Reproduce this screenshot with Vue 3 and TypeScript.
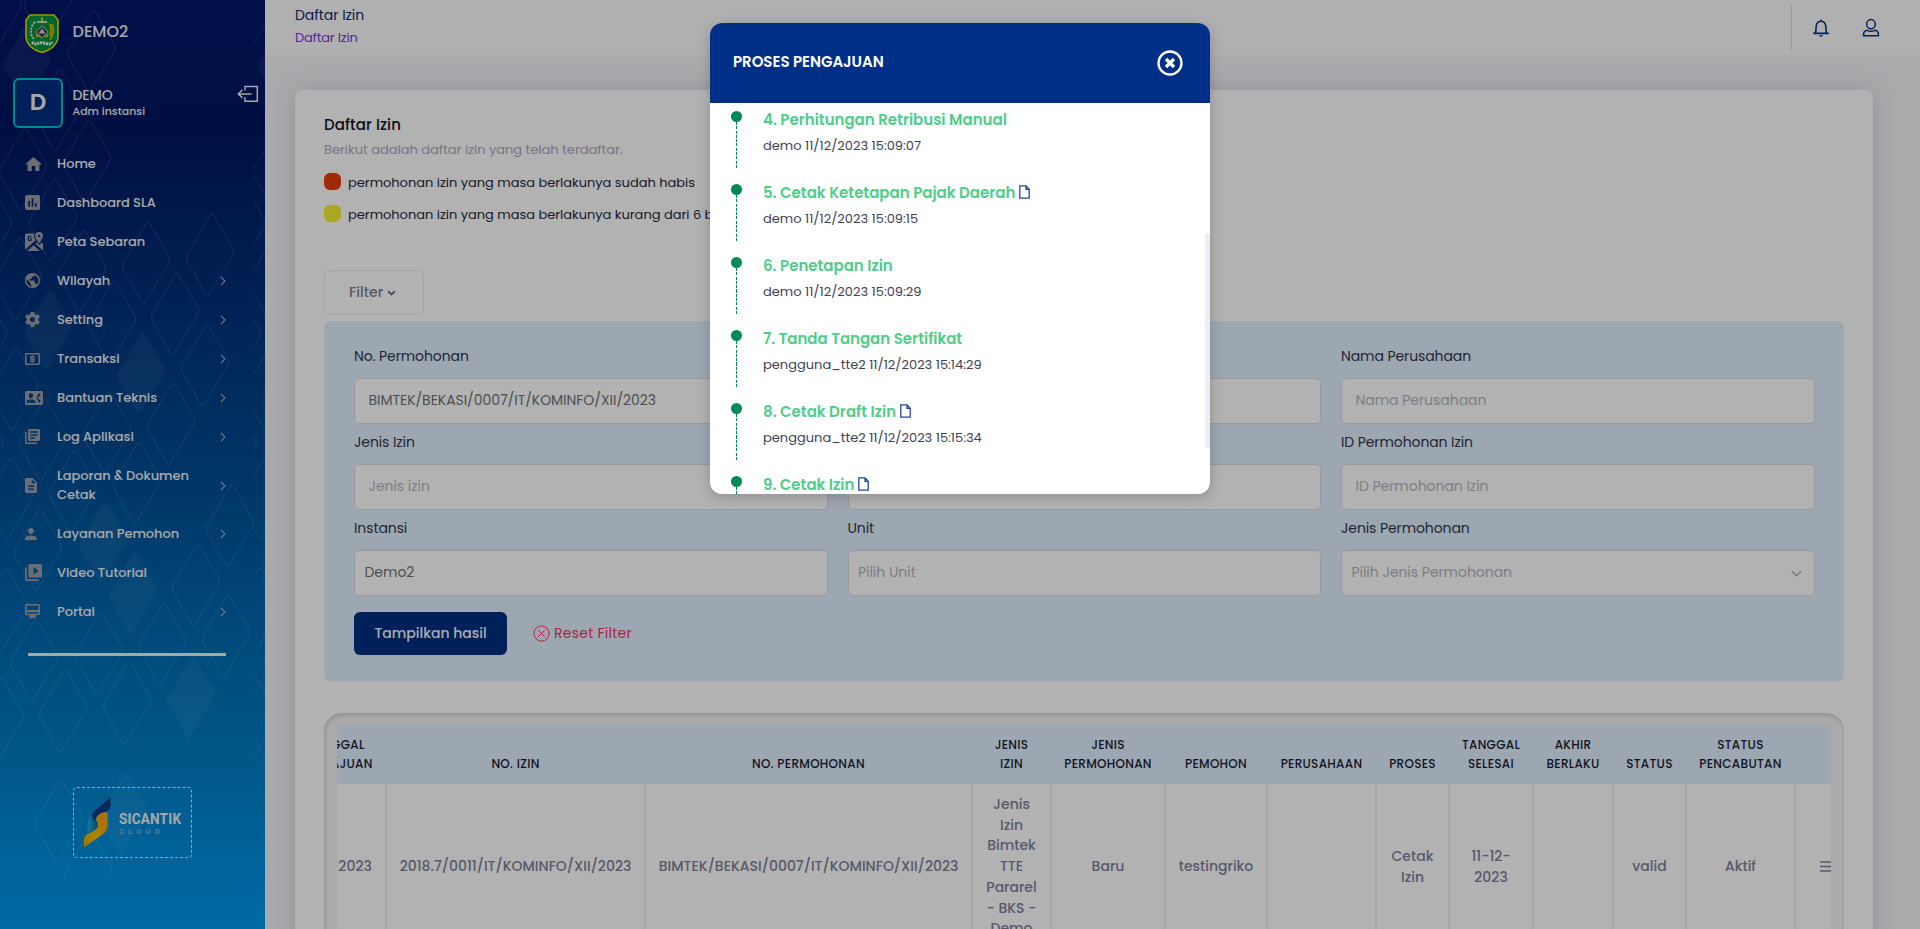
<script setup lang="ts">
interface MenuItem {
  label: string
  path: string
  viewBox: string
  width: number
  height: number
  arrow?: boolean
  tall?: boolean
}

interface Step {
  title: string
  info: string
  file?: boolean
}

interface Field {
  label: string
  placeholder: string
  value?: string
  kind?: 'input' | 'select'
  arrow?: boolean
}

const menu: MenuItem[] = [
  { label: 'Home', width: 17, height: 14, viewBox: '2 3 20 17', path: 'M10 20v-6h4v6h5v-8h3L12 3 2 12h3v8z' },
  { label: 'Dashboard SLA', width: 15, height: 15, viewBox: '3 3 18 18', path: 'M19 3H5c-1.1 0-2 .9-2 2v14c0 1.1.9 2 2 2h14c1.1 0 2-.9 2-2V5c0-1.1-.9-2-2-2zM9 17H7v-7h2v7zm4 0h-2V7h2v10zm4 0h-2v-4h2v4z' },
  { label: 'Peta Sebaran', width: 18, height: 19, viewBox: '0 0 18 19', path: 'M14 0Q10 .2 10 4Q10.400 7 14 11.200Q17.600 7 18 4Q18 .2 14 0zM14 2.400L15.600 4L14 5.600L12.400 4zM2 1.500H9Q8.300 5 10.600 8.200L.3 17.600Q0 17.200 0 16.500V3.500Q0 1.500 2 1.500zM6.400 3.900H3.800L2.700 5V7.800L3.800 8.900H6.600V6H4.700V7H5.500V7.900H4.200L3.800 7.400V5.400L4.200 4.900H6.400zM2.200 19L8.600 13.200L15 19zM10.400 11.800L12 10.200L14 13L17 10.500Q18 11 18 12V17.500Q18 18 17.500 18.300z' },
  { label: 'Wilayah', arrow: true, width: 15, height: 15, viewBox: '2 2 20 20', path: 'M12 2C6.480 2 2 6.480 2 12s4.480 10 10 10 10-4.480 10-10S17.520 2 12 2zm-1 17.930c-3.950-.49-7-3.850-7-7.930 0-.62.08-1.210.21-1.790L9 15v1c0 1.100.9 2 2 2v1.930zm6.900-2.540c-.26-.81-1-1.390-1.900-1.390h-1v-3c0-.55-.45-1-1-1H8v-2h2c.55 0 1-.45 1-1V7h2c1.100 0 2-.9 2-2v-.41c2.930 1.190 5 4.060 5 7.410 0 2.080-.8 3.970-2.100 5.390z' },
  { label: 'Setting', arrow: true, width: 15, height: 15, viewBox: '2 2 20 20', path: 'M19.430 12.980c.04-.32.07-.64.07-.98s-.03-.66-.07-.98l2.110-1.650c.19-.15.24-.42.12-.64l-2-3.460c-.12-.22-.39-.3-.61-.22l-2.490 1c-.52-.4-1.080-.73-1.690-.98l-.38-2.650C14.460 2.180 14.250 2 14 2h-4c-.25 0-.46.18-.49.42l-.38 2.650c-.61.25-1.170.59-1.690.98l-2.490-1c-.23-.09-.49 0-.61.22l-2 3.460c-.13.22-.07.49.12.64l2.110 1.650c-.04.32-.07.65-.07.98s.03.66.07.98l-2.110 1.650c-.19.15-.24.42-.12.64l2 3.460c.12.22.39.3.61.22l2.490-1c.52.4 1.080.73 1.690.98l.38 2.650c.03.24.24.42.49.42h4c.25 0 .46-.18.49-.42l.38-2.650c.61-.25 1.170-.59 1.690-.98l2.490 1c.23.09.49 0 .61-.22l2-3.460c.12-.22.07-.49-.12-.64l-2.110-1.650zM12 15.500c-1.930 0-3.500-1.570-3.500-3.500s1.570-3.500 3.500-3.500 3.500 1.570 3.500 3.500-1.570 3.500-3.500 3.500z' },
  { label: 'Transaksi', arrow: true, width: 15, height: 12, viewBox: '2 4 20 16', path: 'M11 17h2v-1h1c.55 0 1-.45 1-1v-3c0-.55-.45-1-1-1h-3v-1h4V8h-2V7h-2v1h-1c-.55 0-1 .45-1 1v3c0 .55.45 1 1 1h3v1H9v2h2v1zm9-13H4c-1.110 0-1.990.89-1.990 2L2 18c0 1.110.89 2 2 2h16c1.110 0 2-.89 2-2V6c0-1.110-.89-2-2-2zm0 14H4V6h16v12z' },
  { label: 'Bantuan Teknis', arrow: true, width: 18, height: 14, viewBox: '0 3 24 18', path: 'M22 3H2C.9 3 0 3.900 0 5v14c0 1.100.9 2 2 2h20c1.100 0 1.990-.9 1.990-2L24 5c0-1.100-.9-2-2-2zM8 6c1.660 0 3 1.340 3 3s-1.340 3-3 3-3-1.340-3-3 1.340-3 3-3zm6 12H2v-1c0-2 4-3.100 6-3.100s6 1.100 6 3.100v1zm3.850-4h1.640L21 16l-1.990 1.990c-1.310-.98-2.280-2.380-2.730-3.990-.18-.64-.28-1.310-.28-2s.1-1.360.28-2c.45-1.620 1.420-3.010 2.730-3.990L21 8l-1.510 2h-1.640c-.22.63-.35 1.300-.35 2s.13 1.370.35 2z' },
  { label: 'Log Aplikasi', arrow: true, width: 15, height: 15, viewBox: '2 2 20 20', path: 'M4 6H2v14c0 1.100.9 2 2 2h14v-2H4V6zm16-4H8c-1.100 0-2 .9-2 2v12c0 1.100.9 2 2 2h12c1.100 0 2-.9 2-2V4c0-1.100-.9-2-2-2zm-1 9H9V9h10v2zm-4 4H9v-2h6v2zm4-8H9V5h10v2z' },
  { label: 'Laporan & Dokumen Cetak', arrow: true, tall: true, width: 12, height: 15, viewBox: '4 2 16 20', path: 'M14 2H6c-1.100 0-1.990.9-1.990 2L4 20c0 1.100.89 2 1.990 2H18c1.100 0 2-.9 2-2V8l-6-6zm2 16H8v-2h8v2zm0-4H8v-2h8v2zm-3-5V3.500L18.500 9H13z' },
  { label: 'Layanan Pemohon', arrow: true, width: 12, height: 12, viewBox: '4 4 16 16', path: 'M12 12c2.210 0 4-1.790 4-4s-1.790-4-4-4-4 1.790-4 4 1.790 4 4 4zm0 2c-2.670 0-8 1.340-8 4v2h16v-2c0-2.660-5.330-4-8-4z' },
  { label: 'Video Tutorial', width: 17, height: 17, viewBox: '2 2 20 20', path: 'M4 6H2v14c0 1.100.9 2 2 2h14v-2H4V6zm16-4H8c-1.100 0-2 .9-2 2v12c0 1.100.9 2 2 2h12c1.100 0 2-.9 2-2V4c0-1.100-.9-2-2-2zm-8 12.500v-9l6 4.500-6 4.500z' },
  { label: 'Portal', arrow: true, width: 15, height: 15, viewBox: '2 2 20 20', path: 'M20 2H4c-1.110 0-2 .89-2 2v11c0 1.110.89 2 2 2h4v5l4-2 4 2v-5h4c1.110 0 2-.89 2-2V4c0-1.110-.89-2-2-2zm0 13H4v-2h16v2zm0-5H4V4h16v6z' },
]

const steps: Step[] = [
  { title: '4. Perhitungan Retribusi Manual', info: 'demo 11/12/2023 15:09:07' },
  { title: '5. Cetak Ketetapan Pajak Daerah', info: 'demo 11/12/2023 15:09:15', file: true },
  { title: '6. Penetapan Izin', info: 'demo 11/12/2023 15:09:29' },
  { title: '7. Tanda Tangan Sertifikat', info: 'pengguna_tte2 11/12/2023 15:14:29' },
  { title: '8. Cetak Draft Izin', info: 'pengguna_tte2 11/12/2023 15:15:34', file: true },
  { title: '9. Cetak Izin', info: '', file: true },
]

const fields: Field[] = [
  { label: 'No. Permohonan', placeholder: '', value: 'BIMTEK/BEKASI/0007/IT/KOMINFO/XII/2023' },
  { label: '', placeholder: '' },
  { label: 'Nama Perusahaan', placeholder: 'Nama Perusahaan' },
  { label: 'Jenis Izin', placeholder: 'Jenis izin' },
  { label: '', placeholder: '' },
  { label: 'ID Permohonan Izin', placeholder: 'ID Permohonan Izin' },
  { label: 'Instansi', placeholder: '', value: 'Demo2', kind: 'select' },
  { label: 'Unit', placeholder: 'Pilih Unit', kind: 'select' },
  { label: 'Jenis Permohonan', placeholder: 'Pilih Jenis Permohonan', kind: 'select', arrow: true },
]

const columns: string[][] = [
  ['TANGGAL', 'PENGAJUAN'], ['NO. IZIN'], ['NO. PERMOHONAN'], ['JENIS', 'IZIN'], ['JENIS', 'PERMOHONAN'],
  ['PEMOHON'], ['PERUSAHAAN'], ['PROSES'], ['TANGGAL', 'SELESAI'], ['AKHIR', 'BERLAKU'], ['STATUS'],
  ['STATUS', 'PENCABUTAN'], [],
]

const row: string[][] = [
  ['11-12-2023'], ['2018.7/0011/IT/KOMINFO/XII/2023'], ['BIMTEK/BEKASI/0007/IT/KOMINFO/XII/2023'],
  ['Jenis', 'Izin', 'Bimtek', 'TTE', 'Pararel', '- BKS -', 'Demo'], ['Baru'], ['testingriko'], [],
  ['Cetak', 'Izin'], ['11-12-', '2023'], [], ['valid'], ['Aktif'],
]

/* Centres of the decorative diamonds in one 254px wide background tile. */
const outlined: number[][] = [
  [-2, 8], [48, 2], [91.5, 51], [57.5, 110], [87, 161], [23, 169], [-12, 226], [53, 220], [82, 271], [146, 263],
  [210, 255], [112, 322], [175, 314], [18, 279], [-17, 336], [14, 389], [205, 365], [171, 424], [107, 432],
  [43, 440], [-21, 446], [137, 483], [73, 491], [9, 499], [230, 526], [38, 550], [196, 585], [4, 609],
  [162, 644], [226, 636], [99, 653], [34, 660], [63, 711], [127, 703], [0, 719], [59, 821], [88, 872],
]
const filled: number[][] = [[27, 62], [48, 330], [141, 373], [103, 542], [133, 593], [191, 697], [123, 813]]

const diamond = ([x, y]: number[]): string =>
  `M${x - 0.5} ${y - 38}Q${x + 1.5} ${y - 43} ${x + 4.5} ${y - 38}L${x + 22.5} ${y - 7}Q${x + 25} ${y - 3} ${x + 22.5} ${y + 1}` +
  `L${x} ${y + 38}Q${x - 2} ${y + 43} ${x - 5} ${y + 38}L${x - 22.5} ${y + 7}Q${x - 25} ${y + 3} ${x - 22.5} ${y - 1}Z`
</script>

<template>
  <div class="page">
    <aside class="sidebar">
      <svg class="pattern" width="265" height="881" viewBox="0 0 265 881">
        <svg v-for="x in [0, 254]" :key="x" :x="x" y="0" width="254" height="881">
          <path v-for="(c, i) in filled" :key="'f' + i" :d="diamond(c)" fill="#fff" fill-opacity="0.055" />
          <path v-for="(c, i) in outlined" :key="'o' + i" :d="diamond(c)" fill="none" stroke="#fff" stroke-opacity="0.13" />
        </svg>
      </svg>

      <div class="brand">
        <svg class="emblem" width="34" height="39" viewBox="0 0 34 39">
          <path d="M5 1h24l4 5v17q-1 11-16 15.500Q2 34 1 23V6z" fill="#05913d" stroke="#e6d800" stroke-width="1.600" />
          <path d="M17 3.500v5" stroke="#ffe400" stroke-width="1.600" />
          <path d="M12 8h10" stroke="#e9e9e9" stroke-width="1.600" />
          <path d="M17 12l6.500 6-6.500 6-6.500-6z" fill="#3b4148" stroke="#c9c9c9" />
          <path d="M17 14.500l3.500 5h-7z" fill="#c9ccd2" />
          <path d="M11 20l6 4 6-4v3h-12z" fill="#e2bd00" />
          <path d="M10 8Q5 13 6 20l3 6" fill="none" stroke="#e9e9e9" stroke-width="2" stroke-dasharray="2 1.300" />
          <path d="M27 10q2.500 6 0 12l-2 4M25 10q2 6 0 12" fill="none" stroke="#e5c400" stroke-width="1.500" />
          <path d="M7 28q3 3 6 1.500t8 0 6-1.500" fill="none" stroke="#efefef" stroke-width="3" stroke-dasharray="2.200 .7" />
        </svg>
        <span>DEMO2</span>
      </div>

      <div class="profile">
        <div class="avatar">D</div>
        <div class="who">
          <strong>DEMO</strong>
          <small>Adm instansi</small>
        </div>
        <svg class="logout" width="22" height="18" viewBox="0 0 22 18" fill="none" stroke="#ededed" stroke-width="1.500">
          <path d="M8 5.500V1.500h12.300v14.800H8v-4" />
          <path d="M14.500 8.900H2M5.500 4.800 1.300 8.900l4.200 4.100" />
        </svg>
      </div>

      <nav class="menu">
        <a v-for="item in menu" :key="item.label" class="menu-item" :class="{ tall: item.tall }">
          <span class="menu-icon">
            <svg :width="item.width" :height="item.height" :viewBox="item.viewBox" preserveAspectRatio="none">
              <path :d="item.path" fill="#9c9ca9" fill-rule="evenodd" />
            </svg>
          </span>
          <span class="menu-label">{{ item.label }}</span>
          <svg v-if="item.arrow" class="menu-arrow" width="6" height="10" viewBox="0 0 6 10">
            <path d="M1 .8 4.800 5 1 9.200" fill="none" stroke="#b5b5c3" stroke-width="1.100" />
          </svg>
        </a>
      </nav>

      <div class="divider"></div>

      <div class="logo-box">
        <svg width="27" height="51" viewBox="0 0 27 51">
          <defs>
            <linearGradient id="cyan" x1="0" x2="1"><stop offset="0" stop-color="#18b4ee" /><stop offset="1" stop-color="#0a5e9c" /></linearGradient>
            <linearGradient id="gold" x1="1" y1="0" x2="0" y2="1"><stop offset="0" stop-color="#f9a13a" /><stop offset=".3" stop-color="#f5a500" /><stop offset=".6" stop-color="#f0c400" /><stop offset="1" stop-color="#e6a100" /></linearGradient>
          </defs>
          <path d="M9 16Q3 20 3.500 34L8 37q8-5 6-11-4-3-5-10z" fill="url(#cyan)" />
          <path d="M26.500 0v9q-.5 4-5 6l-9 5q-2 3-1 5Q7 21 8.500 16z" fill="#053a80" />
          <path d="M12 22q1-4 5-6 3-1 6.500-.5v14q-.5 5-5 8L0 50.500V42q0-3 4-5 6-2.500 9.500-6 1.500-3-1.500-9z" fill="url(#gold)" />
        </svg>
        <div class="logo-text"><b>SICANTIK</b><span>CLOUD</span></div>
      </div>
    </aside>

    <div class="content">
      <header class="topbar">
        <div class="crumbs">
          <h1>Daftar Izin</h1>
          <a>Daftar Izin</a>
        </div>
        <div class="tools">
          <svg width="18" height="20" viewBox="0 0 18 20">
            <path d="M9 1.500v1.700M3.500 15.200C4.200 13 3.800 10 4.300 7.600 4.800 5 6.500 3.300 9 3.300s4.200 1.700 4.700 4.300c.5 2.400.1 5.400.8 7.600M1.200 15.400h15.600" fill="none" stroke="#0b2f7c" stroke-width="1.600" />
            <path d="M7 17.200h4q-.5 1.600-2 1.600t-2-1.600z" fill="#0b2f7c" />
          </svg>
          <svg width="18" height="20" viewBox="0 0 18 20" fill="none" stroke="#0b2f7c" stroke-width="1.500">
            <ellipse cx="9" cy="6.200" rx="4.300" ry="4.600" />
            <path d="M5.200 12.300Q1.300 12.500 1.500 17.700h15Q16.700 12.500 12.800 12.300 9 14.300 5.200 12.300z" />
          </svg>
        </div>
      </header>

      <main class="card">
        <h2>Daftar Izin</h2>
        <p class="sub">Berikut adalah daftar izin yang telah terdaftar.</p>
        <div class="legend"><i class="swatch red"></i><span>permohonan izin yang masa berlakunya sudah habis</span></div>
        <div class="legend"><i class="swatch yellow"></i><span>permohonan izin yang masa berlakunya kurang dari 6 bulan</span></div>

        <button class="filter-toggle">
          Filter
          <svg width="9" height="6" viewBox="0 0 9 6"><path d="M1.200 1.200 4.500 4.400 7.800 1.200" fill="none" stroke="#6d6f84" stroke-width="2" /></svg>
        </button>

        <section class="filters">
          <div class="grid">
            <div v-for="(f, i) in fields" :key="i" class="field">
              <label>{{ f.label }}</label>
              <div class="control" :class="{ select: f.kind === 'select', placeholder: !f.value }">
                <span>{{ f.value || f.placeholder }}</span>
                <svg v-if="f.arrow" width="11" height="7" viewBox="0 0 11 7"><path d="M.7.8 5.500 5.800 10.300.8" fill="none" stroke="#a4a4ac" stroke-width="1.200" /></svg>
              </div>
            </div>
          </div>
          <div class="actions">
            <button class="submit">Tampilkan hasil</button>
            <button class="reset">
              <svg width="17" height="17" viewBox="0 0 17 17" fill="none" stroke="#f0325c"><circle cx="8.500" cy="8.500" r="7.600" /><path d="M5.300 5.300l6.400 6.400M11.700 5.300l-6.400 6.400" /></svg>
              Reset Filter
            </button>
          </div>
        </section>

        <section class="table-wrap">
          <div class="table-scroll">
            <div class="tr head">
              <div v-for="(c, i) in columns" :key="i" class="th"><span v-for="t in c" :key="t">{{ t }}</span></div>
            </div>
            <div class="tr body">
              <div v-for="(c, i) in row" :key="i" class="td"><span v-for="t in c" :key="t">{{ t }}</span></div>
              <div class="td action">
                <svg width="13" height="11" viewBox="0 0 13 11"><path d="M0 1h13M0 5.500h13M0 10h13" stroke="#7e8299" stroke-width="1.500" /></svg>
              </div>
            </div>
          </div>
        </section>
      </main>
    </div>

    <div class="overlay">
      <div class="modal">
        <div class="modal-head">
          <h3>PROSES PENGAJUAN</h3>
          <svg width="26" height="26" viewBox="0 0 26 26" fill="none" stroke="#fff">
            <circle cx="13" cy="13" r="11.500" stroke-width="2.300" />
            <path d="M9 9l8 8M17 9l-8 8" stroke-width="3.200" />
          </svg>
        </div>
        <div class="modal-body">
          <div v-for="s in steps" :key="s.title" class="step">
            <div class="rail"><i></i></div>
            <div class="step-text">
              <h4>
                {{ s.title }}
                <svg v-if="s.file" width="11" height="14" viewBox="0 0 11 14" fill="none" stroke="#1f459b" stroke-width="1.300">
                  <path d="M.8.8h6.200l3.200 3.500v8.900H.8zM7 .8v3.500h3.200" />
                </svg>
              </h4>
              <p>{{ s.info }}</p>
            </div>
          </div>
          <div class="thumb"></div>
        </div>
      </div>
    </div>
  </div>
</template>

<style>
html,
body {
  margin: 0;
  height: 100%;
  overflow: hidden;
}
</style>

<style scoped>
.page {
  position: relative;
  display: flex;
  width: 1920px;
  height: 929px;
  overflow: hidden;
  background: #f2f4f7;
  font-family: Poppins, Inter, "Liberation Sans", sans-serif;
  font-feature-settings: "cv11", "ss03";
  font-size: 13px;
  color: #3f4254;
}
h1, h2, h3, h4, p { margin: 0; font-weight: 400; }
button { font: inherit; font-feature-settings: inherit; border: 0; padding: 0; background: none; color: inherit; }
svg { display: block; flex: none; }

.sidebar {
  position: relative;
  flex: none;
  box-sizing: border-box;
  width: 265px;
  height: 929px;
  background: linear-gradient(180deg, #001668 0, #001660 130px, #003078 300px, #00498f 450px, #0066ad 620px, #0080c6 770px, #0098ef 929px);
  color: #f1f1f3;
}
.pattern { position: absolute; left: 0; top: 0; }
.brand, .profile, .menu, .divider, .logo-box { position: relative; }
.brand { display: flex; align-items: center; height: 39px; padding: 14px 0 0 25px; }
.brand span { margin: -4px 0 0 13.500px; font-size: 16px; font-weight: 500; letter-spacing: 0.050px; }
.profile { display: flex; height: 50px; margin-top: 25px; padding-left: 13px; }
.avatar {
  box-sizing: border-box;
  width: 50px;
  height: 50px;
  border: 2px solid #00c6c9;
  border-radius: 6px;
  background: #002f80;
  text-align: center;
  font-size: 23px;
  line-height: 45px;
  font-weight: 600;
}
.who { width: 164.500px; padding: 8px 0 0 9.500px; }
.who strong { display: block; font-size: 14px; font-weight: 500; line-height: 19px; letter-spacing: -0.150px; }
.who small { display: block; font-size: 11px; font-weight: 500; line-height: 13px; letter-spacing: -0.020px; }
.logout { margin-top: 7px; }
.menu { padding-top: 16px; }
.menu-item { display: flex; align-items: center; height: 39px; }
.menu-item.tall { height: 58px; }
.menu-icon { display: flex; width: 32px; padding-left: 25px; }
.menu-label { width: 150px; font-size: 13px; font-weight: 500; line-height: 19px; letter-spacing: -0.040px; }
.menu-arrow { margin: 1px 0 0 13px; }
.divider { width: 198px; height: 3px; margin: 22px 0 0 28px; background: #f0f0f2; }
.logo-box {
  display: flex;
  box-sizing: border-box;
  width: 119px;
  height: 71px;
  margin: 131px 0 0 73px;
  padding: 9px 0 0 10px;
  border: 1px dashed #e6edf2;
  border-radius: 4px;
}
.logo-text { padding: 15px 0 0 8px; }
.logo-text b { display: block; font: 700 15px/14px Roboto, sans-serif; transform: scaleX(0.9); transform-origin: left; letter-spacing: 0.250px; }
.logo-text span { display: block; margin-top: 1px; font: 500 7.500px/9px Roboto, sans-serif; letter-spacing: 4.300px; color: #8fbbdc; }

.content { flex: 1; min-width: 0; }
.topbar { display: flex; justify-content: space-between; height: 55px; background: #fdfdfd; }
.crumbs { padding: 5px 0 0 30px; }
.crumbs h1 { font-size: 14px; line-height: 21px; letter-spacing: -0.050px; color: #0a2a70; }
.crumbs a { display: block; font-size: 13px; line-height: 23px; letter-spacing: -0.200px; color: #7239da; }
.tools { display: flex; align-items: center; gap: 32px; box-sizing: border-box; height: 45px; margin: 5px 40.500px 0 0; padding-left: 20px; border-left: 1px solid #dcdce0; }
.card {
  box-sizing: border-box;
  width: 1578px;
  height: 1100px;
  margin: 35px 0 0 30px;
  padding: 23px 29px;
  border-radius: 6px;
  background: #fff;
  box-shadow: 0 0 25px rgba(60, 65, 90, 0.18);
}
.card h2 { font-size: 15px; font-weight: 500; line-height: 24px; letter-spacing: 0.100px; color: #10131f; }
.sub { font-size: 13px; line-height: 24px; padding-top: 1px; margin-bottom: -1px; letter-spacing: -0.010px; color: #a9aab9; }
.legend { display: flex; align-items: center; height: 17px; margin-top: 12px; line-height: 17px; letter-spacing: -0.020px; color: #26283a; }
.legend span { padding-top: 2px; }
.legend + .legend { margin-top: 15px; }
.swatch { width: 17px; height: 17px; margin-right: 7px; border-radius: 6px; }
.red { background: #e23e08; }
.yellow { background: #f5f034; }
.filter-toggle {
  display: flex;
  align-items: center;
  box-sizing: border-box;
  width: 100px;
  height: 45px;
  margin-top: 48px;
  padding-left: 24px;
  gap: 4px;
  border: 1px solid #eaecef;
  border-radius: 6px;
  font-size: 14px;
  font-weight: 500;
  letter-spacing: 0.050px;
  color: #7e8097;
}
.filters { height: 360px; box-sizing: border-box; margin-top: 6px; padding: 24px 30px 0; border-radius: 6px; background: #e1f0ff; }
.grid { display: grid; grid-template-columns: repeat(3, 473.500px); column-gap: 20px; }
.field { height: 86px; }
.field label { display: block; height: 33px; line-height: 22px; font-size: 14px; letter-spacing: -0.100px; color: #32344a; }
.control {
  display: flex;
  align-items: center;
  justify-content: space-between;
  box-sizing: border-box;
  height: 46px;
  padding: 0 12px 0 13.500px;
  border: 1px solid #dfdce6;
  border-radius: 5px;
  background: #fff;
  font-size: 14px;
  letter-spacing: -0.040px;
  color: #707278;
}
.control span { padding-bottom: 2px; }
.control.select { padding-left: 9.500px; }
.control.placeholder { color: #b4b5bd; }
.actions { display: flex; align-items: center; margin-top: 9px; }
.submit { width: 153px; height: 43px; border-radius: 6px; background: #002e82; color: #f5f6fa; font-size: 14px; font-weight: 500; }
.reset { display: flex; align-items: center; gap: 4px; margin-left: 26px; font-size: 14px; letter-spacing: 0.250px; color: #f0325c; }
.table-wrap {
  box-sizing: border-box;
  height: 600px;
  margin-top: 32px;
  padding: 13px;
  border-radius: 18px;
  background: #f4f4f4;
  box-shadow: inset 1px 2px 4px rgba(0, 0, 0, 0.16);
}
.table-scroll { overflow: hidden; background: #fff; }
.tr {
  display: grid;
  grid-template-columns: 101px 259px 327px 79px 114px 102px 109px 73px 84px 80px 73px 109px 70px;
  width: 1580px;
  margin-left: -51px;
}
.head { height: 58px; background: #e1f0ff; font-size: 12px; font-weight: 500; line-height: 19px; letter-spacing: 0.300px; color: #181c32; text-align: center; }
.th { display: flex; flex-direction: column; justify-content: flex-end; padding: 0 2px 11px 0; white-space: nowrap; }
.td {
  display: flex;
  flex-direction: column;
  justify-content: center;
  height: 164px;
  box-sizing: border-box;
  padding-top: 1px;
  border-right: 2px solid #f0f0f2;
  text-align: center;
  font-size: 14px;
  font-weight: 500;
  line-height: 20.800px;
  color: #7e8099;
  white-space: nowrap;
}
.action { align-items: flex-start; padding-left: 24px; }

.overlay { position: absolute; inset: 0; background: rgba(0, 0, 0, 0.3); }
.modal {
  width: 500px;
  height: 471px;
  margin: 23px 0 0 710px;
  overflow: hidden;
  border-radius: 12px;
  background: #fff;
  box-shadow: 0 3px 14px rgba(0, 0, 0, 0.2);
}
.modal-head { display: flex; align-items: center; justify-content: space-between; height: 80px; padding: 0 27px 0 23px; background: #002f87; }
.modal-head h3 { margin-top: -2px; font-size: 15px; font-weight: 600; letter-spacing: -0.050px; line-height: 20px; color: #fff; }
.modal-body { position: relative; height: 391px; overflow: hidden; }
.step { display: flex; height: 73px; padding-left: 21px; }
.rail { display: flex; width: 11px; height: 57px; margin: 8px 21px 0 0; flex-direction: column; align-items: center; }
.rail i { width: 11px; height: 11px; flex: none; border-radius: 50%; background: #008a57; }
.rail::after {
  content: "";
  width: 1px;
  height: 46px;
  background: repeating-linear-gradient(180deg, #008a57 0, #008a57 3px, transparent 3px, transparent 4.300px);
}
.step-text h4 { display: flex; align-items: center; gap: 4px; height: 34px; margin-top: -1px; font-size: 15px; font-weight: 600; letter-spacing: -0.010px; color: #50cd89; }
.step-text p { padding-top: 1px; font-size: 13px; line-height: 18px; color: #3f4254; }
.thumb { position: absolute; right: 0; top: 131px; width: 5px; height: 214px; background: #ebeff4; }
</style>
